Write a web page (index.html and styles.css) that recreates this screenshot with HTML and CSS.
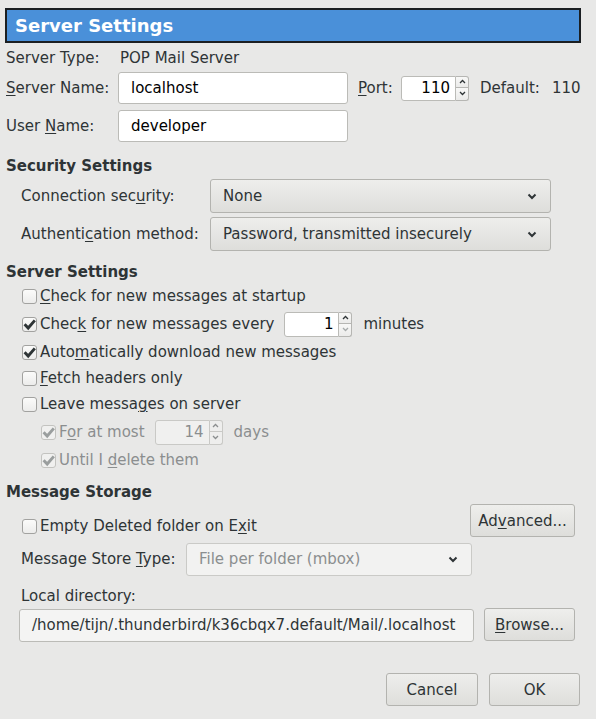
FILE: index.html
```html
<!DOCTYPE html>
<html>
<head>
<meta charset="utf-8">
<link rel="stylesheet" href="styles.css">
</head>
<body>
<div class="dialog">
  <div class="banner">Server Settings</div>

  <div class="top">
    <div class="row r-type">
      <span class="lbl">Server Type:</span>
      <span class="val">POP Mail Server</span>
    </div>
    <div class="row r-name">
      <span class="lbl"><u>S</u>erver Name:</span>
      <span class="entry w-name">localhost</span>
      <span class="port-lbl"><u>P</u>ort:</span>
      <span class="spin">
        <span class="spin-field">110</span>
        <span class="spin-btns">
          <span class="sb up"><svg width="7" height="5" viewBox="0 0 7 5"><polyline points="1,4 3.5,1.5 6,4" fill="none" stroke="#2e3436" stroke-width="1.3"/></svg></span>
          <span class="sb down"><svg width="7" height="5" viewBox="0 0 7 5"><polyline points="1,1 3.5,3.5 6,1" fill="none" stroke="#2e3436" stroke-width="1.3"/></svg></span>
        </span>
      </span>
      <span class="default">Default:</span>
      <span class="default-val">110</span>
    </div>
    <div class="row r-user">
      <span class="lbl">User <u>N</u>ame:</span>
      <span class="entry w-name">developer</span>
    </div>
  </div>

  <div class="heading h-sec">Security Settings</div>
  <div class="row combo-row first">
    <span class="lbl2">Connection sec<u>u</u>rity:</span>
    <span class="combo w-combo"><span>None</span><svg class="chev" width="10" height="7" viewBox="0 0 10 7"><polyline points="1.5,1.5 5,5 8.5,1.5" fill="none" stroke="#2e3436" stroke-width="2"/></svg></span>
  </div>
  <div class="row combo-row">
    <span class="lbl2">Authenti<u>c</u>ation method:</span>
    <span class="combo w-combo"><span>Password, transmitted insecurely</span><svg class="chev" width="10" height="7" viewBox="0 0 10 7"><polyline points="1.5,1.5 5,5 8.5,1.5" fill="none" stroke="#2e3436" stroke-width="2"/></svg></span>
  </div>

  <div class="heading h-srv">Server Settings</div>
  <div class="checks">
    <div class="check-row">
      <span class="box"></span><span><u>C</u>heck for new messages at startup</span>
    </div>
    <div class="check-row gap2">
      <span class="box"><svg width="15" height="15" viewBox="0 0 15 15"><polyline points="2.6,7.2 6.2,11 12.8,3.4" fill="none" stroke="#2e3436" stroke-width="2.9"/></svg></span><span>Chec<u>k</u> for new messages every</span>
      <span class="spin ml10">
        <span class="spin-field">1</span>
        <span class="spin-btns">
          <span class="sb up"><svg width="7" height="5" viewBox="0 0 7 5"><polyline points="1,4 3.5,1.5 6,4" fill="none" stroke="#2e3436" stroke-width="1.3"/></svg></span>
          <span class="sb down"><svg width="7" height="5" viewBox="0 0 7 5"><polyline points="1,1 3.5,3.5 6,1" fill="none" stroke="#a7abab" stroke-width="1.3"/></svg></span>
        </span>
      </span>
      <span class="unit">minutes</span>
    </div>
    <div class="check-row gap2">
      <span class="box"><svg width="15" height="15" viewBox="0 0 15 15"><polyline points="2.6,7.2 6.2,11 12.8,3.4" fill="none" stroke="#2e3436" stroke-width="2.9"/></svg></span><span>Auto<u>m</u>atically download new messages</span>
    </div>
    <div class="check-row">
      <span class="box"></span><span><u>F</u>etch headers only</span>
    </div>
    <div class="check-row">
      <span class="box"></span><span>Leave messa<u>g</u>es on server</span>
    </div>
    <div class="check-row gap2 sub disabled">
      <span class="box"><svg width="15" height="15" viewBox="0 0 15 15"><polyline points="2.6,7.2 6.2,11 12.8,3.4" fill="none" stroke="#9a9e9e" stroke-width="2.9"/></svg></span><span>F<u>o</u>r at most</span>
      <span class="spin ml10 dis">
        <span class="spin-field">14</span>
        <span class="spin-btns">
          <span class="sb up"><svg width="7" height="5" viewBox="0 0 7 5"><polyline points="1,4 3.5,1.5 6,4" fill="none" stroke="#8b8e8f" stroke-width="1.3"/></svg></span>
          <span class="sb down"><svg width="7" height="5" viewBox="0 0 7 5"><polyline points="1,1 3.5,3.5 6,1" fill="none" stroke="#8b8e8f" stroke-width="1.3"/></svg></span>
        </span>
      </span>
      <span class="unit">days</span>
    </div>
    <div class="check-row gap2 sub disabled">
      <span class="box"><svg width="15" height="15" viewBox="0 0 15 15"><polyline points="2.6,7.2 6.2,11 12.8,3.4" fill="none" stroke="#9a9e9e" stroke-width="2.9"/></svg></span><span>Until I <u>d</u>elete them</span>
    </div>
  </div>

  <div class="heading h-msg">Message Storage</div>
  <div class="adv-row">
    <div class="check-row adv-check">
      <span class="box"></span><span>Empty Deleted folder on E<u>x</u>it</span>
    </div>
    <span class="btn w-adv">Ad<u>v</u>anced...</span>
  </div>
  <div class="row store-row">
    <span class="lbl3">Message Store <u>T</u>ype:</span>
    <span class="combo dis w-store"><span>File per folder (mbox)</span><svg class="chev" width="10" height="7" viewBox="0 0 10 7"><polyline points="1.5,1.5 5,5 8.5,1.5" fill="none" stroke="#2e3436" stroke-width="2"/></svg></span>
  </div>
  <div class="dir-lbl">Local directory:</div>
  <div class="dir-row">
    <span class="entry ro w-dir">/home/tijn/.thunderbird/k36cbqx7.default/Mail/.localhost</span>
    <span class="btn w-browse"><u>B</u>rowse...</span>
  </div>

  <div class="actions">
    <span class="btn w-cancel">Cancel</span>
    <span class="btn w-ok">OK</span>
  </div>
</div>
</body>
</html>
```

FILE: styles.css
```css
html, body {
  margin: 0;
  padding: 0;
  background: #e8e8e7;
}
body {
  width: 596px;
  height: 719px;
  overflow: hidden;
  font-family: "DejaVu Sans", "Liberation Sans", sans-serif;
  font-size: 15px;
  color: #2e3436;
}
u { text-decoration: underline; text-underline-offset: 2px; text-decoration-thickness: 1px; }

.dialog {
  display: flex;
  flex-direction: column;
}

.banner {
  margin: 8px 15px 0 5px;
  height: 35px;
  box-sizing: border-box;
  border: 2px solid #1b1f22;
  background: #4a90d9;
  color: #ffffff;
  font-weight: bold;
  font-size: 18px;
  line-height: 31px;
  padding-left: 8px;
}

.row {
  display: flex;
  align-items: center;
}
.top { padding-left: 6px; display: flex; flex-direction: column; }
.lbl { width: 112px; flex: none; }
.val { padding-left: 2px; }
.r-type { margin-top: 2px; height: 26px; }
.r-name { margin-top: 1px; height: 32px; }
.r-user { margin-top: 6px; height: 32px; }

.entry {
  box-sizing: border-box;
  height: 32px;
  background: #ffffff;
  border: 1px solid #bbbbb7;
  border-radius: 3px;
  padding-left: 12px;
  line-height: 30px;
  color: #000000;
  white-space: nowrap;
  overflow: hidden;
}
.w-name { width: 230px; }
.entry.ro { background: #f4f4f3; color: #2e3436; }

.port-lbl { margin-left: 10px; width: 43px; }
.default { margin-left: 11px; width: 72px; }

.spin { display: flex; height: 25px; }
.ml10 { margin-left: 10px; }
.spin-field {
  box-sizing: border-box;
  width: 55px;
  height: 25px;
  background: #ffffff;
  border: 1px solid #bbbbb7;
  border-radius: 3px 0 0 3px;
  text-align: right;
  padding-right: 5px;
  line-height: 23px;
  color: #000000;
}
.spin-btns {
  display: flex;
  flex-direction: column;
  width: 13px;
  height: 25px;
}
.sb {
  box-sizing: border-box;
  height: 12.5px;
  border: 1px solid #b6b6b3;
  border-left: none;
  background: linear-gradient(#f8f8f7, #ebebea);
  display: flex;
  align-items: center;
  justify-content: center;
}
.sb.up { border-radius: 0 3px 0 0; }
.sb.down { border-top: none; border-radius: 0 0 3px 0; }
.spin.dis .spin-field { background: #f0f0ef; color: #8b8e8f; border-color: #c9c9c6; }
.spin.dis .sb { background: #eeeeed; border-color: #c9c9c6; }
.unit { margin-left: 11px; }

.heading {
  padding-left: 6px;
  font-weight: bold;
  height: 20px;
  line-height: 20px;
}
.h-sec { margin-top: 14px; }
.h-srv { margin-top: 11px; }
.h-msg { margin-top: 9px; }

.combo-row { padding-left: 21px; margin-top: 4px; height: 34px; }
.combo-row.first { margin-top: 3px; }
.lbl2 { width: 189px; flex: none; }
.combo {
  box-sizing: border-box;
  height: 34px;
  display: flex;
  align-items: center;
  justify-content: space-between;
  padding: 0 13px 0 12px;
  border: 1px solid #b3b3af;
  border-radius: 3px;
  background: linear-gradient(#eeeeec, #dededb);
}
.w-combo { width: 341px; }
.combo.dis {
  background: #f2f2f1;
  border-color: #cacac7;
  color: #8b8e8f;
}
.chev { flex: none; }

.checks { display: flex; flex-direction: column; padding-top: 1px; }
.check-row {
  display: flex;
  align-items: center;
  padding-left: 22px;
  height: 26px;
}
.check-row.gap2 { margin-top: 2px; }
.check-row.sub { padding-left: 41px; }
.check-row.disabled { color: #8b8e8f; }
.box {
  box-sizing: border-box;
  width: 15px;
  height: 15px;
  flex: none;
  margin-right: 3px;
  border: 1px solid #a2a2a0;
  border-radius: 3px;
  background: linear-gradient(#fbfbfa, #ececeb);
  position: relative;
}
.box svg { position: absolute; left: -1px; top: -1px; }
.disabled .box { border-color: #c3c3c0; background: #f0f0ef; }

.adv-row {
  margin-top: 2px;
  height: 36px;
  display: flex;
  justify-content: space-between;
  align-items: flex-start;
  padding-right: 21px;
}
.adv-check { align-self: flex-end; height: 28px; }

.btn {
  box-sizing: border-box;
  height: 33px;
  display: flex;
  align-items: center;
  justify-content: center;
  border: 1px solid #b3b3af;
  border-radius: 3px;
  background: linear-gradient(#eeeeec, #dededb);
  flex: none;
}
.w-adv { width: 105px; }
.w-browse { width: 91px; }
.w-cancel { width: 92px; }
.w-ok { width: 91px; }

.store-row { padding-left: 21px; margin-top: 2px; height: 34px; }
.lbl3 { width: 165px; flex: none; }
.w-store { width: 286px; height: 33px; }

.dir-lbl { padding-left: 21px; margin-top: 10px; height: 20px; line-height: 20px; }
.dir-row {
  margin-top: 2px;
  height: 34px;
  display: flex;
  align-items: flex-start;
  padding-left: 19px;
  gap: 10px;
}
.w-dir { width: 455px; height: 33px; margin-top: 1px; line-height: 31px; }

.actions {
  margin-top: 31px;
  display: flex;
  justify-content: flex-end;
  gap: 11px;
  padding-right: 16px;
}
```
